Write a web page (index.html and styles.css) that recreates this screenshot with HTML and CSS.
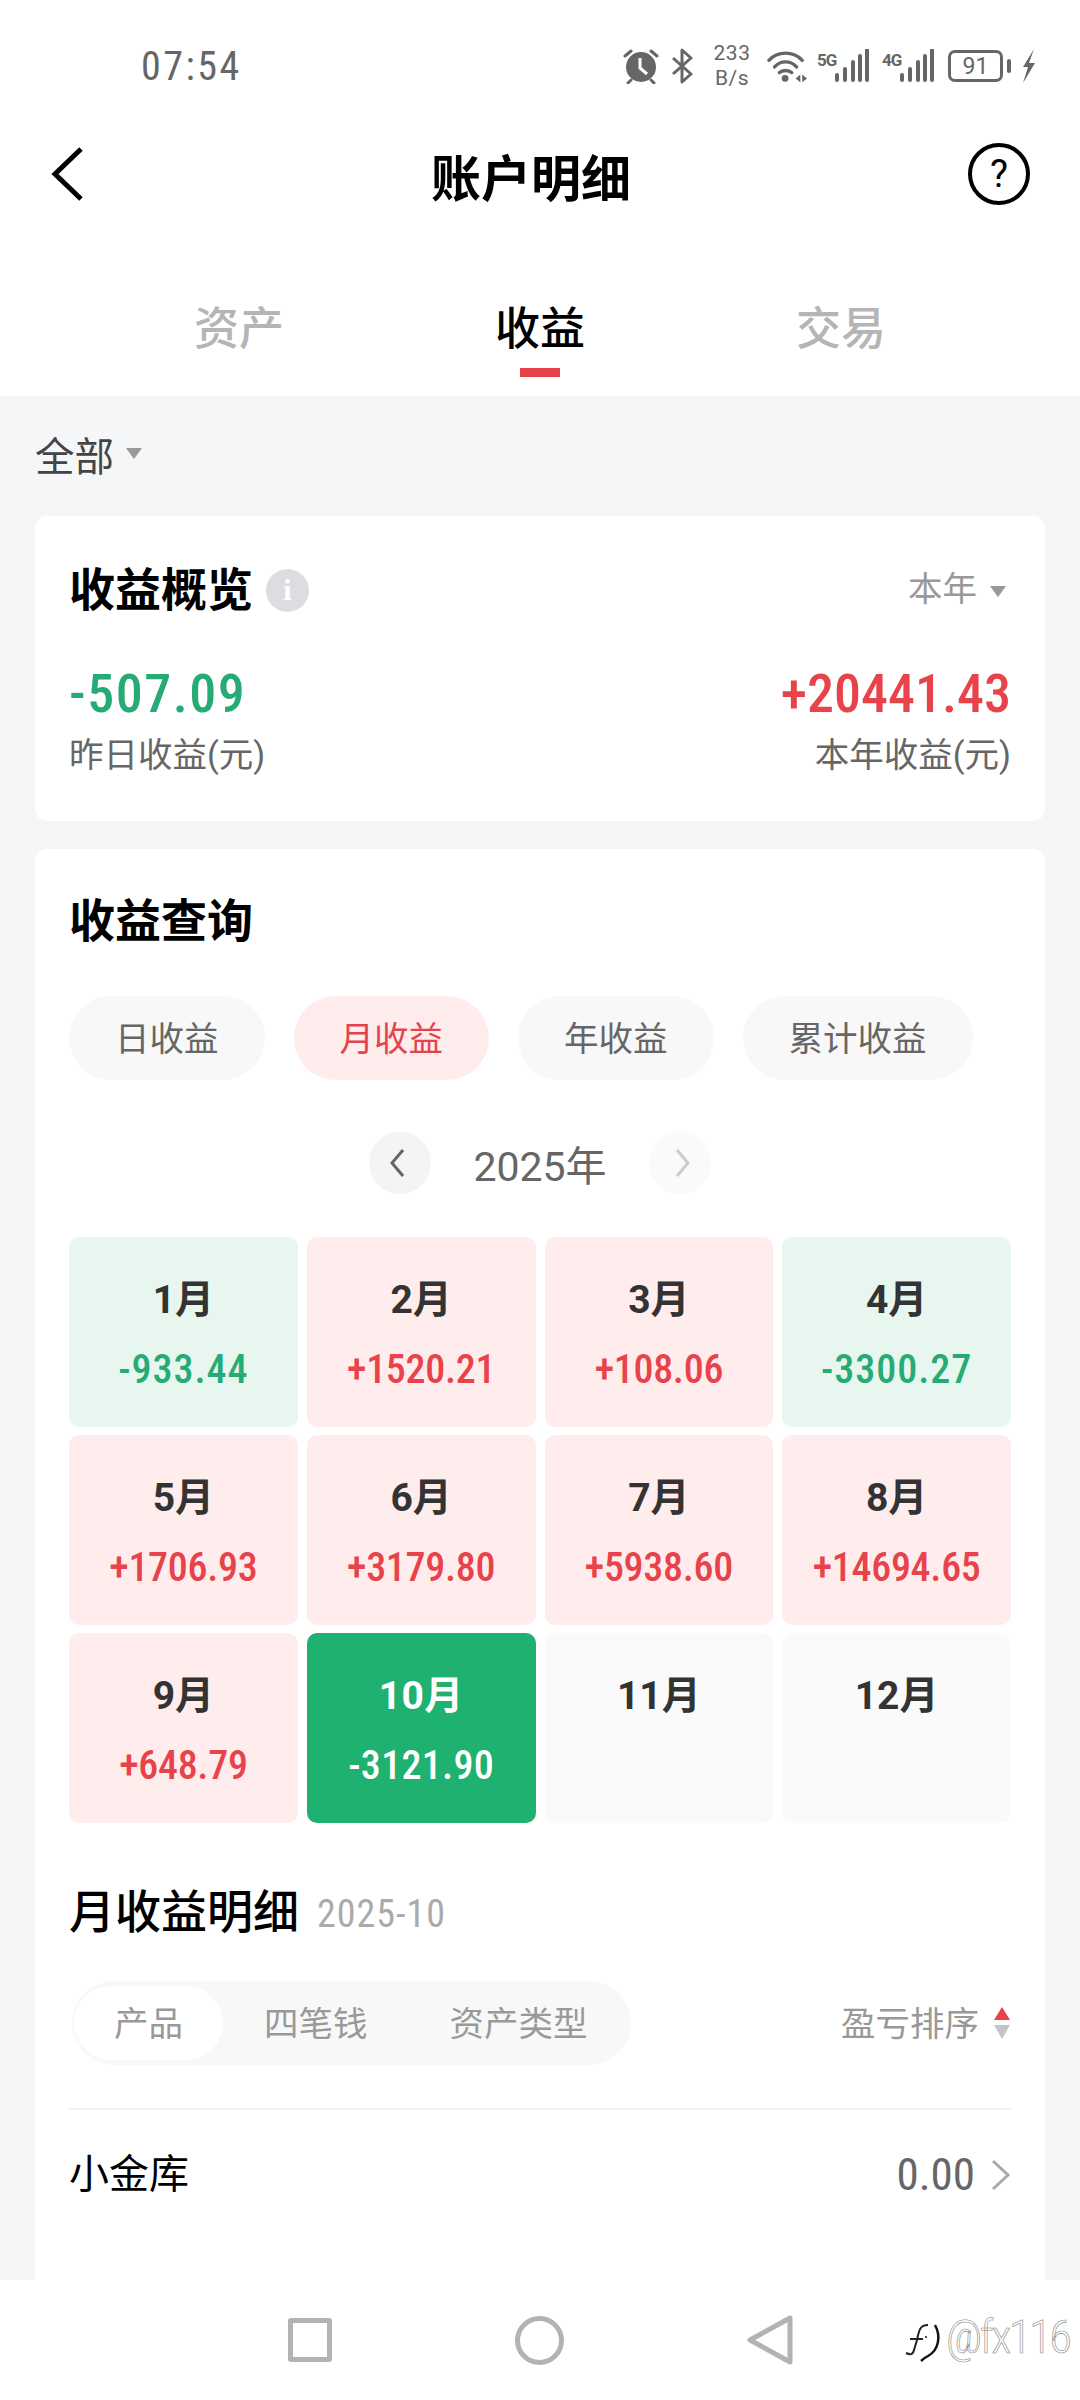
FILE: index.html
```html
<!DOCTYPE html>
<html lang="zh-CN">
	<head>
		<meta charset="UTF-8" />
		<meta name="viewport" content="width=device-width, initial-scale=1.0" />
		<title>账户明细</title>
		<link rel="stylesheet" href="styles.css">
	</head>
	<body>
		<div class="top">
			<div class="status-bar">
				<span class="time">07:54</span>
				<div class="status-icons">
					<svg class="ic-alarm" width="36" height="36" viewBox="0 0 36 36">
						<path d="M2 8 L8 3 M34 8 L28 3 M8 32 L5 35 M28 32 L31 35" stroke="#666" stroke-width="3" stroke-linecap="round" fill="none"/>
						<circle cx="18" cy="19" r="15" fill="#666"/>
						<path d="M17 10 V20 L24 26" stroke="#fff" stroke-width="3" fill="none"/>
					</svg>
					<svg class="ic-bt" width="22" height="36" viewBox="0 0 22 36">
						<path d="M2 10 L20 26 L11 34 V2 L20 10 L2 26" stroke="#666" stroke-width="3" stroke-linejoin="round" fill="none"/>
					</svg>
					<div class="net-speed"><span>233</span><span>B/s</span></div>
					<svg class="ic-wifi" width="40" height="36" viewBox="0 0 42 36">
						<path d="M2 12 C11 2 28 2 37 12 M8 19 C14 12 25 12 31 19 M13 25 C16 22 23 22 26 25" stroke="#666" stroke-width="3.5" stroke-linecap="round" fill="none"/>
						<circle cx="19" cy="31" r="3.5" fill="#666"/>
						<path d="M30 31 L35 27 V35 Z M37 27 L42 31 L37 35 Z" fill="#666"/>
					</svg>
					<div class="signal">
						<span class="sig-tag">5G</span>
						<svg width="36" height="34" viewBox="0 0 36 34"><path d="M3 26 V31 M11 20 V31 M19 13 V31 M26 7 V31 M33 1 V31" stroke="#666" stroke-width="4" stroke-linecap="round"/></svg>
					</div>
					<div class="signal">
						<span class="sig-tag">4G</span>
						<svg width="36" height="34" viewBox="0 0 36 34"><path d="M3 26 V31 M11 20 V31 M19 13 V31 M26 7 V31 M33 1 V31" stroke="#666" stroke-width="4" stroke-linecap="round"/></svg>
					</div>
					<div class="battery"><span class="battery-level">91</span><span class="battery-nub"></span></div>
					<svg class="ic-bolt" width="15" height="36" viewBox="0 0 15 36">
						<path d="M13 1 L2 19 H7 L2 35 L14 15 H8 Z" fill="#666"/>
					</svg>
				</div>
			</div>

			<div class="nav-bar">
				<svg class="back-icon" width="36" height="56" viewBox="0 0 36 56">
					<path d="M31 3 L5 28 L31 53" stroke="#000" stroke-width="5" fill="none"/>
				</svg>
				<h1 class="page-title">账户明细</h1>
				<div class="help-icon">?</div>
			</div>

			<div class="tabs">
				<div class="tab">资产</div>
				<div class="tab tab-active">收益</div>
				<div class="tab">交易</div>
			</div>
		</div>

		<main class="content">
			<div class="filter-row">
				<span class="filter-label">全部</span>
				<span class="caret"></span>
			</div>

			<section class="card overview">
				<div class="row-between overview-head">
					<div class="head-left">
						<h2 class="card-title">收益概览</h2>
						<span class="info-icon">i</span>
					</div>
					<div class="period">本年<span class="caret caret-small"></span></div>
				</div>
				<div class="row-between overview-nums">
					<span class="big-num green-text">-507.09</span>
					<span class="big-num red-text">+20441.43</span>
				</div>
				<div class="row-between overview-labels">
					<span>昨日收益(元)</span>
					<span>本年收益(元)</span>
				</div>
			</section>

			<section class="card query">
				<h2 class="card-title">收益查询</h2>

				<div class="pills">
					<div class="pill">日收益</div>
					<div class="pill pill-active">月收益</div>
					<div class="pill">年收益</div>
					<div class="pill">累计收益</div>
				</div>

				<div class="year-row">
					<div class="year-btn">
						<svg class="year-prev" width="16" height="30" viewBox="0 0 16 30"><path d="M14 2 L3 15 L14 28" stroke="#666" stroke-width="3" fill="none"/></svg>
					</div>
					<span class="year-label">2025年</span>
					<div class="year-btn year-btn-off">
						<svg class="year-next" width="16" height="30" viewBox="0 0 16 30"><path d="M2 2 L13 15 L2 28" stroke="#ccc" stroke-width="3" fill="none"/></svg>
					</div>
				</div>

				<div class="month-grid">
					<div class="month loss"><div class="month-name">1月</div><div class="month-val">-933.44</div></div>
					<div class="month gain"><div class="month-name">2月</div><div class="month-val">+1520.21</div></div>
					<div class="month gain"><div class="month-name">3月</div><div class="month-val">+108.06</div></div>
					<div class="month loss"><div class="month-name">4月</div><div class="month-val">-3300.27</div></div>
					<div class="month gain"><div class="month-name">5月</div><div class="month-val">+1706.93</div></div>
					<div class="month gain"><div class="month-name">6月</div><div class="month-val">+3179.80</div></div>
					<div class="month gain"><div class="month-name">7月</div><div class="month-val">+5938.60</div></div>
					<div class="month gain"><div class="month-name">8月</div><div class="month-val">+14694.65</div></div>
					<div class="month gain"><div class="month-name">9月</div><div class="month-val">+648.79</div></div>
					<div class="month selected"><div class="month-name">10月</div><div class="month-val">-3121.90</div></div>
					<div class="month empty"><div class="month-name">11月</div></div>
					<div class="month empty"><div class="month-name">12月</div></div>
				</div>

				<div class="detail-head">
					<h3 class="detail-title">月收益明细</h3>
					<span class="detail-date">2025-10</span>
				</div>

				<div class="row-between detail-tools">
					<div class="segment">
						<div class="seg-item seg-active">产品</div>
						<div class="seg-item">四笔钱</div>
						<div class="seg-item">资产类型</div>
					</div>
					<div class="sort">
						<span class="sort-label">盈亏排序</span>
						<svg width="18" height="32" viewBox="0 0 18 32">
							<path d="M9 0 L17 13 H1 Z" fill="#e8434b"/>
							<path d="M1 18 H17 L9 32 Z" fill="#c4c4c4"/>
						</svg>
					</div>
				</div>

				<div class="row-between detail-row">
					<span class="detail-name">小金库</span>
					<div class="detail-amount">
						<span class="amount-num">0.00</span>
						<svg width="20" height="32" viewBox="0 0 20 32"><path d="M2 2 L17 16 L2 30" stroke="#aaa" stroke-width="3" fill="none"/></svg>
					</div>
				</div>
			</section>
		</main>

		<div class="system-nav">
			<span class="nav-square"></span>
			<span class="nav-circle"></span>
			<svg class="nav-back" width="46" height="50" viewBox="0 0 46 50">
				<path d="M43 3 V47 L3 25 Z" stroke="#b3b3b3" stroke-width="5" stroke-linejoin="round" fill="none"/>
			</svg>
			<!-- watermark sits over the nav bar -->
			<div class="watermark">
				<svg class="wm-logo" width="40" height="42" viewBox="0 0 40 42">
					<path d="M25 3 C17 3 16 8 14 18 L11 28 C10 33 7 33 3 31 M7 17 H20" stroke="#222" stroke-width="2" fill="none"/>
					<path d="M32 3 C38 14 36 28 25 34 C21 36 19 38 18 39" stroke="#111" stroke-width="2.5" fill="none"/>
					<circle cx="23" cy="15" r="1" fill="#222"/>
				</svg>
				<span class="wm-text">@fx116</span>
			</div>
		</div>
	</body>
</html>
```

FILE: styles.css
```css
* {
	box-sizing: border-box;
}

body {
	margin: 0;
	width: 1080px;
	height: 2400px;
	overflow: hidden;
	display: flex;
	flex-direction: column;
	background-color: #f5f6f8;
	font-family: Roboto, "Noto Sans CJK SC", sans-serif;
	color: #333;
}

h1,
h2,
h3 {
	margin: 0;
}

.top {
	background-color: #fff;
	height: 396px;
	flex-shrink: 0;
}

/* Status bar */
.status-bar {
	height: 132px;
	display: flex;
	justify-content: space-between;
	align-items: center;
	padding: 0 44px 0 141px;
}

.time {
	font-family: "Roboto Condensed", Roboto, sans-serif;
	font-size: 40px;
	color: #666;
	letter-spacing: 2.5px;
}

.status-icons {
	display: flex;
	align-items: center;
	color: #666;
}

.ic-alarm {
	margin-right: 12px;
}

.net-speed {
	display: flex;
	flex-direction: column;
	align-items: center;
	width: 38px;
	margin: 0 16px 0 20px;
	font-size: 21px;
	line-height: 25px;
	letter-spacing: 0.5px;
}

.signal {
	display: flex;
	align-items: flex-start;
	margin-left: 10px;
	width: 53px;
}

.sig-tag {
	font-size: 17px;
	font-weight: 700;
	line-height: 22px;
	width: 17px;
	letter-spacing: -1px;
	white-space: nowrap;
}

.signal + .signal {
	margin-left: 12px;
}

.battery {
	position: relative;
	width: 55px;
	height: 32px;
	margin: 0 18px 0 13px;
	border: 3px solid #666;
	border-radius: 7px;
	display: flex;
	align-items: center;
	justify-content: center;
	font-size: 23px;
}

.battery-nub {
	position: absolute;
	right: -11px;
	top: 6px;
	width: 4px;
	height: 14px;
	background-color: #666;
	border-radius: 2px;
}

/* Title bar */
.nav-bar {
	height: 90px;
	display: flex;
	justify-content: space-between;
	align-items: center;
	padding: 0 50px;
}

.back-icon {
	margin-bottom: 6px;
}

.page-title {
	font-size: 50px;
	font-weight: 700;
	color: #000;
	margin: 0 0 5px 8px;
}

.help-icon {
	width: 62px;
	height: 62px;
	margin-bottom: 6px;
	border: 4px solid #000;
	border-radius: 50%;
	display: flex;
	align-items: center;
	justify-content: center;
	font-size: 38px;
	color: #000;
}

/* Tabs */
.tabs {
	display: flex;
	justify-content: center;
}

.tab {
	width: 301px;
	padding-top: 70px;
	text-align: center;
	font-size: 45px;
	line-height: 76px;
	font-weight: 500;
	color: #b5b5b5;
}

.tab-active {
	color: #000;
}

.tab-active::after {
	content: "";
	display: block;
	width: 40px;
	height: 9px;
	margin: 0 auto;
	background-color: #e8434b;
}

/* Main area */
.content {
	flex: 1;
	min-height: 0;
	overflow: hidden;
	padding: 0 35px;
}

.filter-row {
	height: 120px;
	padding-bottom: 6px;
	display: flex;
	align-items: center;
	gap: 12px;
}

.filter-label {
	font-size: 39.5px;
	color: #444;
}

.caret {
	width: 0;
	height: 0;
	border-left: 8px solid transparent;
	border-right: 8px solid transparent;
	border-top: 11px solid #999;
}

.caret-small {
	display: inline-block;
	margin-left: 13px;
	vertical-align: middle;
}

.card {
	background-color: #fff;
	border-radius: 12px;
	padding: 44px 34px 42px;
}

.row-between {
	display: flex;
	justify-content: space-between;
	align-items: center;
}

.card-title {
	font-size: 46px;
	line-height: 60px;
	font-weight: 700;
	color: #000;
}

.head-left {
	display: flex;
	align-items: center;
	gap: 13px;
}

.info-icon {
	width: 43px;
	height: 43px;
	border-radius: 50%;
	background-color: #dcdde0;
	color: #fff;
	display: flex;
	align-items: center;
	justify-content: center;
	font-family: "Liberation Serif", serif;
	font-size: 30px;
	font-weight: 700;
}

.period {
	padding: 0 5px 8px 0;
	font-size: 34.5px;
	color: #999;
}

.overview-nums {
	margin-top: 44px;
}

/* narrow digits, the app uses a DIN style face */
.big-num,
.month-val,
.amount-num,
.detail-date,
.wm-text {
	font-family: "Roboto Condensed", Roboto, sans-serif;
}

.big-num {
	font-size: 54px;
	line-height: 60px;
	font-weight: 500;
}

.green-text {
	color: #27ab74;
	letter-spacing: 1.5px;
}

.red-text {
	color: #e8434b;
}

.overview-labels {
	margin-top: 7px;
	font-size: 34.5px;
	line-height: 48px;
	color: #666;
}

.overview {
	margin-bottom: 28px;
}

/* Query card */
.query {
	padding-top: 42px;
	padding-bottom: 160px;
}

.pills {
	display: flex;
	gap: 29px;
	margin-top: 45px;
}

.pill {
	height: 84px;
	padding: 0 46px 5px;
	border-radius: 42px;
	background-color: #f8f8f9;
	display: flex;
	align-items: center;
	font-size: 34.5px;
	color: #666;
}

.pill-active {
	background-color: #ffecec;
	color: #e5434b;
}

.year-row {
	display: flex;
	justify-content: center;
	align-items: center;
	gap: 42px;
	margin-top: 52px;
	height: 62px;
}

.year-btn {
	width: 62px;
	height: 62px;
	border-radius: 50%;
	background-color: #f4f4f5;
	display: flex;
	align-items: center;
	justify-content: center;
}

.year-btn-off {
	background-color: #fafafa;
}

.year-prev {
	margin-right: 6px;
}

.year-next {
	margin-left: 6px;
}

.year-label {
	font-size: 41px;
	color: #666;
}

.month-grid {
	display: grid;
	grid-template-columns: repeat(4, 1fr);
	grid-auto-rows: 190px;
	gap: 8px 9px;
	margin-top: 43px;
}

.month {
	border-radius: 10px;
	padding-top: 38px;
	text-align: center;
}

.month-name {
	font-size: 39px;
	line-height: 50px;
	font-weight: 700;
	color: #333;
}

.month-val {
	margin-top: 22px;
	font-size: 40px;
	line-height: 46px;
	font-weight: 500;
	letter-spacing: -0.3px;
}

.gain {
	background-color: #ffeded;
}

.gain .month-val {
	color: #e8434b;
}

.loss {
	background-color: #e7f6ef;
}

.loss .month-val {
	color: #27ab74;
	letter-spacing: 1px;
}

.selected {
	background-color: #1fb170;
}

.selected .month-name,
.selected .month-val {
	color: #fff;
	letter-spacing: 0.3px;
}

.empty {
	background-color: #fafafb;
}

/* Monthly detail */
.detail-head {
	display: flex;
	align-items: center;
	gap: 18px;
	margin-top: 59px;
}

.detail-title {
	font-size: 46px;
	line-height: 60px;
	font-weight: 500;
	color: #000;
}

.detail-date {
	margin-top: 4px;
	font-size: 38px;
	letter-spacing: 1px;
	color: #aaa;
}

.detail-tools {
	margin-top: 39px;
	padding-bottom: 43px;
	border-bottom: 2px solid #f0f2f5;
}

.segment {
	display: flex;
	height: 84px;
	margin-left: 3px;
	padding: 5px 2px;
	border-radius: 42px;
	background-color: #f8f8f9;
	font-size: 34.5px;
	color: #999;
}

.seg-item {
	display: flex;
	align-items: center;
	padding: 0 40px 5px;
	border-radius: 37px;
}

.seg-item + .seg-item {
	padding: 0 41px 5px;
}

.seg-active {
	background-color: #fff;
}

.sort {
	display: flex;
	align-items: center;
	gap: 14px;
	font-size: 34.5px;
	color: #999;
}

.sort-label {
	padding-bottom: 5px;
}

.detail-row {
	margin-top: 35px;
	line-height: 60px;
}

.detail-name {
	font-size: 40px;
	color: #000;
}

.detail-amount {
	display: flex;
	align-items: center;
	gap: 16px;
	font-size: 45px;
	color: #666;
}

/* System navigation */
.system-nav {
	position: relative;
	height: 120px;
	flex-shrink: 0;
	background-color: #fff;
	display: flex;
	justify-content: center;
	align-items: center;
	gap: 183px;
}

.nav-square {
	width: 44px;
	height: 44px;
	border: 5px solid #b3b3b3;
	border-radius: 3px;
}

.nav-circle {
	width: 49px;
	height: 49px;
	border: 5px solid #b3b3b3;
	border-radius: 50%;
}

.watermark {
	position: absolute;
	left: 903px;
	top: 30px;
	display: flex;
	align-items: center;
	gap: 3px;
}

.wm-logo {
	margin-top: 12px;
}

.wm-text {
	font-size: 46px;
	font-weight: 300;
	letter-spacing: -2.2px;
	color: #fff;
	-webkit-text-stroke: 0.6px #888;
}
```
